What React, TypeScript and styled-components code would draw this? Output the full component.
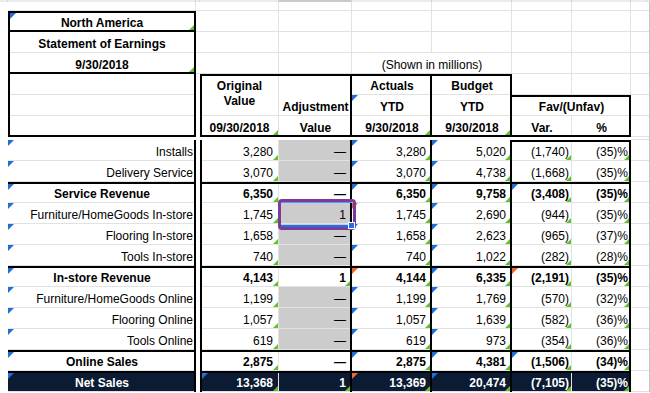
import React from "react";
import styled, { createGlobalStyle } from "styled-components";

const GRID = "#e2e2e2";
const INK = "#000";
const NAVY = "#0c1b34";
const BLUE = "#1f6fd6";
const ORANGE = "#ee6a2a";
const GREEN = "#5cc424";
const GREY = "#cccccc";

type Tri = "blue" | "orange";
type Edge = { t?: number; r?: number; b?: number; l?: number };

type CellProps = {
  $span?: number;
  $rows?: number;
  $align?: "left" | "center" | "right";
  $valign?: "middle" | "bottom";
  $bold?: boolean;
  $bg?: string;
  $ink?: string;
  $edge?: Edge;
  $pad?: boolean;
  $tl?: Tri;
  $br?: boolean;
  $wrap?: boolean;
};

const shadow = (e: Edge = {}) => {
  const s: string[] = [];
  if (e.t) s.push(`inset 0 ${e.t}px 0 ${INK}`);
  if (e.b) s.push(`inset 0 -${e.b}px 0 ${INK}`);
  if (e.l) s.push(`inset ${e.l}px 0 0 ${INK}`);
  if (e.r) s.push(`inset -${e.r}px 0 0 ${INK}`);
  s.push(`inset -1px -1px 0 ${GRID}`);
  return s.join(", ");
};

const GlobalStyle = createGlobalStyle`
  html, body {
    margin: 0;
    padding: 0;
    background: #fff;
    overflow: hidden;
  }
  body {
    font-family: "Liberation Sans", Arial, Helvetica, sans-serif;
    font-size: 12px;
    color: #000;
  }
`;

const Sheet = styled.div`
  display: grid;
  grid-template-columns: 8px 188px 4px 79px 73px 80px 80px 60px 59px 16px 1fr;
  grid-template-rows: 2px 9px repeat(6, 21px) 3px repeat(12, 21px);
  width: 650px;
`;

const HeadStrip = styled.div<{ $active?: boolean }>`
  background: ${(p) => (p.$active ? "#c9cacc" : "#ececec")};
  box-shadow: inset -1px 0 0 #d6d6d6;
`;

const Gutter = styled.div<{ $lines?: boolean }>`
  background: #fff;
  box-shadow: ${(p) => (p.$lines ? `inset 0 -1px 0 ${GRID}` : "none")};
`;

const Margin = styled.div<{ $edge?: boolean }>`
  background: #fff;
  box-shadow: ${(p) =>
    p.$edge
      ? `inset -1px 0 0 #c4c4c4, inset 0 -1px 0 ${GRID}`
      : `inset 0 -1px 0 ${GRID}`};
`;

const Cell = styled.div<CellProps>`
  position: relative;
  box-sizing: border-box;
  min-width: 0;
  grid-column: span ${(p) => p.$span ?? 1};
  grid-row: span ${(p) => p.$rows ?? 1};
  display: flex;
  align-items: ${(p) => (p.$valign === "middle" ? "center" : "flex-end")};
  justify-content: ${(p) =>
    p.$align === "center" ? "center" : p.$align === "left" ? "flex-start" : "flex-end"};
  text-align: ${(p) => p.$align ?? "right"};
  padding: 0 ${(p) => (p.$pad ? 6 : 3)}px 2px 3px;
  line-height: ${(p) => (p.$wrap ? 15 : 14)}px;
  white-space: ${(p) => (p.$wrap ? "normal" : "nowrap")};
  font-weight: ${(p) => (p.$bold ? 700 : 400)};
  background: ${(p) => p.$bg ?? "#fff"};
  color: ${(p) => p.$ink ?? INK};
  box-shadow: ${(p) => shadow(p.$edge)};

  &::before {
    content: ${(p) => (p.$tl ? '""' : "none")};
    position: absolute;
    top: ${(p) => p.$edge?.t ?? 0}px;
    left: ${(p) => p.$edge?.l ?? 0}px;
    border-top: 6px solid ${(p) => (p.$tl === "orange" ? ORANGE : BLUE)};
    border-right: 6px solid transparent;
  }

  &::after {
    content: ${(p) => (p.$br ? '""' : "none")};
    position: absolute;
    bottom: ${(p) => Math.max(1, p.$edge?.b ?? 0)}px;
    right: ${(p) => Math.max(1, p.$edge?.r ?? 0)}px;
    border-bottom: 5px solid ${GREEN};
    border-left: 5px solid transparent;
  }
`;

const Focus = styled.div`
  position: absolute;
  left: 0;
  right: 0;
  top: -2px;
  bottom: -3px;
  border-top: 2px solid #5b9af5;
  border-bottom: 2px solid #1a73e8;
  z-index: 2;
  pointer-events: none;
`;

const Ring = styled.div`
  position: absolute;
  left: -1px;
  top: -4px;
  width: 78px;
  height: 31px;
  box-sizing: border-box;
  border: 3px solid #7b3b9c;
  border-radius: 4px;
  z-index: 3;
  pointer-events: none;
`;

const Handle = styled.div`
  position: absolute;
  right: -3px;
  bottom: -5px;
  width: 5px;
  height: 5px;
  background: #1a73e8;
  border: 1px solid #fff;
  z-index: 4;
`;

type Kind = "item" | "total" | "net";

type DataRow = {
  label: string;
  kind: Kind;
  vals: [string, string, string, string, string, string];
  bTl?: Tri;
  dTl: Tri;
  fTl?: Tri;
  cBr?: boolean;
  selected?: boolean;
};

const rows: DataRow[] = [
  { label: "Installs", kind: "item", vals: ["3,280", "—", "3,280", "5,020", "(1,740)", "(35)%"], dTl: "blue" },
  { label: "Delivery Service", kind: "item", vals: ["3,070", "—", "3,070", "4,738", "(1,668)", "(35)%"], dTl: "blue" },
  { label: "Service Revenue", kind: "total", vals: ["6,350", "—", "6,350", "9,758", "(3,408)", "(35)%"], dTl: "blue", fTl: "blue" },
  { label: "Furniture/HomeGoods In-store", kind: "item", vals: ["1,745", "1", "1,745", "2,690", "(944)", "(35)%"], dTl: "orange", selected: true },
  { label: "Flooring In-store", kind: "item", vals: ["1,658", "—", "1,658", "2,623", "(965)", "(37)%"], dTl: "blue" },
  { label: "Tools In-store", kind: "item", vals: ["740", "—", "740", "1,022", "(282)", "(28)%"], dTl: "blue" },
  { label: "In-store Revenue", kind: "total", vals: ["4,143", "1", "4,144", "6,335", "(2,191)", "(35)%"], dTl: "orange", fTl: "orange", cBr: true },
  { label: "Furniture/HomeGoods Online", kind: "item", vals: ["1,199", "—", "1,199", "1,769", "(570)", "(32)%"], dTl: "blue" },
  { label: "Flooring Online", kind: "item", vals: ["1,057", "—", "1,057", "1,639", "(582)", "(36)%"], dTl: "blue" },
  { label: "Tools Online", kind: "item", vals: ["619", "—", "619", "973", "(354)", "(36)%"], dTl: "blue" },
  { label: "Online Sales", kind: "total", vals: ["2,875", "—", "2,875", "4,381", "(1,506)", "(34)%"], dTl: "blue", fTl: "blue" },
  { label: "Net Sales", kind: "net", vals: ["13,368", "1", "13,369", "20,474", "(7,105)", "(35)%"], bTl: "blue", dTl: "orange", cBr: true },
];

const positive = (v: string) => !/[)%]$/.test(v);

const Tail = () => (
  <>
    <Margin />
    <Margin $edge />
  </>
);

const Blank = () => <Cell />;

const SheetRow = ({ row, first }: { row: DataRow; first: boolean }) => {
  const heavy = row.kind !== "item";
  const t = heavy ? 2 : 0;
  const bg = row.kind === "net" ? NAVY : undefined;
  const ink = row.kind === "net" ? "#fff" : undefined;
  const [b, c, d, e, f, g] = row.vals;

  return (
    <>
      <Gutter />
      <Cell
        $align={heavy ? "center" : "right"}
        $bold={heavy}
        $bg={bg}
        $ink={ink}
        $edge={{ t, r: 2 }}
        $tl="blue"
      >
        {row.label}
      </Cell>
      <Gutter />
      <Cell $bold={heavy} $bg={bg} $ink={ink} $edge={{ t, l: 2 }} $pad={positive(b)} $tl={row.bTl} $br>
        {b}
      </Cell>
      <Cell
        $bold={heavy}
        $bg={row.kind === "item" ? GREY : bg}
        $ink={ink}
        $edge={{ t, r: 2 }}
        $pad={positive(c)}
        $br={row.cBr}
      >
        {c}
        {row.selected && (
          <>
            <Focus />
            <Ring />
            <Handle />
          </>
        )}
      </Cell>
      <Cell $bold={heavy} $bg={bg} $ink={ink} $edge={{ t, r: 2 }} $pad={positive(d)} $tl={row.dTl} $br>
        {d}
      </Cell>
      <Cell $bold={heavy} $bg={bg} $ink={ink} $edge={{ t, r: 2 }} $pad={positive(e)} $tl="blue" $br>
        {e}
      </Cell>
      <Cell $bold={heavy} $bg={bg} $ink={ink} $edge={{ t: first ? 2 : t }} $tl={row.fTl} $br>
        {f}
      </Cell>
      <Cell $bold={heavy} $bg={bg} $ink={ink} $edge={{ t: first ? 2 : t, r: 2 }} $br>
        {g}
      </Cell>
      <Tail />
    </>
  );
};

const App = () => (
  <>
    <GlobalStyle />
    <Sheet>
      {Array.from({ length: 11 }).map((_, i) => (
        <HeadStrip key={i} $active={i === 4} />
      ))}

      {/* spacer row */}
      <Gutter />
      <Blank />
      <Gutter $lines />
      <Blank />
      <Blank />
      <Blank />
      <Blank />
      <Blank />
      <Blank />
      <Tail />

      {/* title block */}
      <Gutter />
      <Cell $align="center" $bold $edge={{ t: 2, l: 2, r: 2, b: 2 }} $tl="blue" $br>
        North America
      </Cell>
      <Gutter $lines />
      <Blank />
      <Blank />
      <Blank />
      <Blank />
      <Blank />
      <Blank />
      <Tail />

      <Gutter />
      <Cell $align="center" $bold $edge={{ l: 2, r: 2 }}>
        Statement of Earnings
      </Cell>
      <Gutter $lines />
      <Blank />
      <Blank />
      <Blank />
      <Blank />
      <Blank />
      <Blank />
      <Tail />

      <Gutter />
      <Cell $align="center" $bold $edge={{ l: 2, r: 2, b: 2 }} $br>
        9/30/2018
      </Cell>
      <Gutter $lines />
      <Blank />
      <Blank />
      <Cell $span={2} $align="center">
        (Shown in millions)
      </Cell>
      <Blank />
      <Blank />
      <Tail />

      {/* column headings */}
      <Gutter />
      <Cell $edge={{ l: 2, r: 2 }} />
      <Gutter />
      <Cell $rows={2} $align="center" $valign="middle" $wrap $bold $edge={{ t: 2, l: 2 }}>
        Original Value
      </Cell>
      <Cell $rows={2} $align="center" $bold $edge={{ t: 2, r: 2 }}>
        Adjustment
      </Cell>
      <Cell $align="center" $bold $edge={{ t: 2, r: 2 }}>
        Actuals
      </Cell>
      <Cell $align="center" $bold $edge={{ t: 2, r: 2 }}>
        Budget
      </Cell>
      <Blank />
      <Blank />
      <Tail />

      <Gutter />
      <Cell $edge={{ l: 2, r: 2 }} />
      <Gutter />
      <Cell $align="center" $bold $edge={{ r: 2 }} $tl="blue">
        YTD
      </Cell>
      <Cell $align="center" $bold $edge={{ r: 2 }}>
        YTD
      </Cell>
      <Cell $span={2} $align="center" $bold $edge={{ t: 2, r: 2 }}>
        Fav/(Unfav)
      </Cell>
      <Tail />

      <Gutter />
      <Cell $edge={{ l: 2, r: 2, b: 2 }} />
      <Gutter />
      <Cell $align="center" $bold $edge={{ l: 2, b: 2 }} $br>
        09/30/2018
      </Cell>
      <Cell $align="center" $bold $edge={{ r: 2, b: 2 }}>
        Value
      </Cell>
      <Cell $align="center" $bold $edge={{ r: 2, b: 2 }} $br>
        9/30/2018
      </Cell>
      <Cell $align="center" $bold $edge={{ r: 2, b: 2 }} $br>
        9/30/2018
      </Cell>
      <Cell $align="center" $bold $edge={{ b: 2 }}>
        Var.
      </Cell>
      <Cell $align="center" $bold $edge={{ r: 2, b: 2 }}>
        %
      </Cell>
      <Tail />

      {/* thin gap between heading and body */}
      {Array.from({ length: 9 }).map((_, i) => (
        <Gutter key={`g${i}`} />
      ))}
      <Tail />

      {rows.map((row, i) => (
        <SheetRow key={row.label} row={row} first={i === 0} />
      ))}
    </Sheet>
  </>
);

export default App;
